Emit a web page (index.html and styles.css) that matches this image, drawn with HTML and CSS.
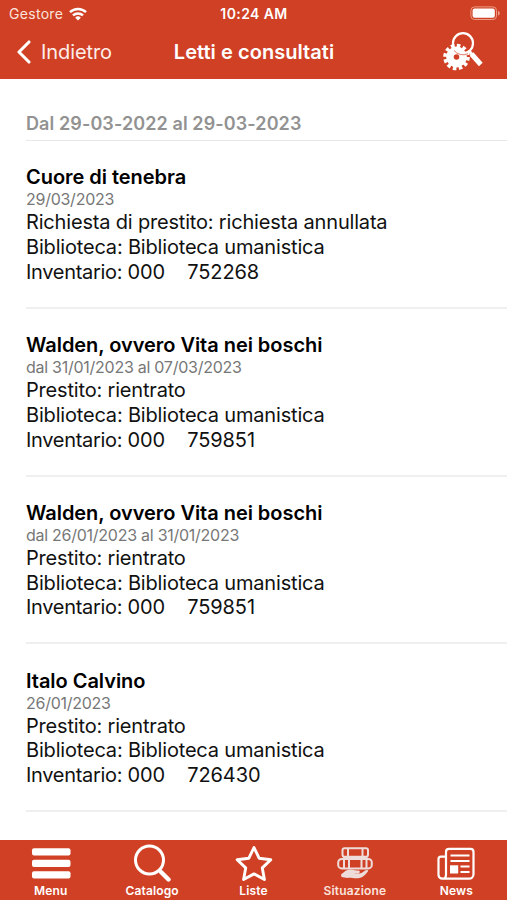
FILE: index.html
```html
<!DOCTYPE html>
<html lang="it">
	<head>
		<meta charset="utf-8"/>
		<title>Letti e consultati</title>
		<link rel="stylesheet" href="styles.css">
	</head>
	<body>
		<div class="app">
			<header class="header">
				<div class="status">
					<div class="operatore">
						<span class="gestore">Gestore</span>
						<svg class="wifi" width="18" height="14" viewBox="0 0 18 14">
							<g fill="none" stroke="#fff" stroke-width="2.5">
								<path d="M1 5.1a11.6 11.6 0 0 1 16 0"/>
								<path d="M4 8.4a7.3 7.3 0 0 1 10 0"/>
							</g>
							<path d="M9 13.6L6.2 10.7a4 4 0 0 1 5.6 0z" fill="#fff"/>
						</svg>
					</div>
					<span class="ora">10:24 AM</span>
					<svg class="batteria" width="31" height="15" viewBox="0 0 31 15">
						<rect x=".9" y=".9" width="25.6" height="12.6" rx="3.6" fill="none" stroke="#ea9c86"/>
						<rect x="2.6" y="2.6" width="22.2" height="9.2" rx="2" fill="#fff"/>
						<path d="M28 4.8c2.4.8 2.4 4 0 4.8z" fill="#ea9c86"/>
					</svg>
				</div>
				<div class="nav">
					<div class="indietro">
						<svg width="16" height="24" viewBox="0 0 16 24">
							<path d="M13 2L3 12l10 10" fill="none" stroke="#fff" stroke-width="3.1" stroke-linecap="round" stroke-linejoin="round"/>
						</svg>
						<span>Indietro</span>
					</div>
					<h1>Letti e consultati</h1>
					<svg class="filtro" width="42" height="40" viewBox="0 0 42 40">
						<circle cx="13.5" cy="25" r="6.6" fill="none" stroke="#fff" stroke-width="7.6"/>
						<circle cx="13.5" cy="25" r="11.2" fill="none" stroke="#fff" stroke-width="4.2" stroke-dasharray="3.4 2.464"/>
						<circle cx="20" cy="11.2" r="10" fill="none" stroke="#fff" stroke-width="2.2"/>
						<path d="M11 18.5a11.500 11.500 0 0 0 14 3.200" fill="none" stroke="#d04025" stroke-width=".7"/>
						<path d="M26.5 19.5l3 3.5" stroke="#fff" stroke-width="3"/>
						<path d="M28.5 22l9.300 10.500" stroke="#fff" stroke-width="5"/>
					</svg>
				</div>
			</header>

			<main class="lista">
				<h2>Dal 29-03-2022 al 29-03-2023</h2>
				<div class="libro">
					<h3>Cuore di tenebra</h3>
					<div class="data">29/03/2023</div>
					<p>Richiesta di prestito: richiesta annullata</p>
					<p>Biblioteca: Biblioteca umanistica</p>
					<p class="inventario">Inventario: <span>000    752268</span></p>
				</div>
				<div class="libro">
					<h3>Walden, ovvero Vita nei boschi</h3>
					<div class="data">dal 31/01/2023 al 07/03/2023</div>
					<p>Prestito: rientrato</p>
					<p>Biblioteca: Biblioteca umanistica</p>
					<p class="inventario">Inventario: <span>000    759851</span></p>
				</div>
				<div class="libro">
					<h3>Walden, ovvero Vita nei boschi</h3>
					<div class="data">dal 26/01/2023 al 31/01/2023</div>
					<p>Prestito: rientrato</p>
					<p>Biblioteca: Biblioteca umanistica</p>
					<p class="inventario">Inventario: <span>000    759851</span></p>
				</div>
				<div class="libro">
					<h3>Italo Calvino</h3>
					<div class="data">26/01/2023</div>
					<p>Prestito: rientrato</p>
					<p>Biblioteca: Biblioteca umanistica</p>
					<p class="inventario">Inventario: <span>000    726430</span></p>
				</div>
			</main>

			<nav class="tabs">
				<div class="tab">
					<svg width="42" height="42" viewBox="0 0 42 42">
						<g fill="#fff">
							<rect x="2" y="8.3" width="38.5" height="7.2" rx="2"/>
							<rect x="2" y="19.8" width="38.5" height="7.2" rx="2"/>
							<rect x="2" y="31.2" width="38.5" height="7.2" rx="2"/>
						</g>
					</svg>
					<span>Menu</span>
				</div>
				<div class="tab">
					<svg width="42" height="42" viewBox="0 0 42 42">
						<circle cx="18.5" cy="20" r="14" fill="none" stroke="#fff" stroke-width="3"/>
						<path d="M27.500 29.500l3 3" stroke="#fff" stroke-width="3"/>
						<path d="M30 32l7.500 7.500" stroke="#fff" stroke-width="4.400" stroke-linecap="round"/>
					</svg>
					<span>Catalogo</span>
				</div>
				<div class="tab">
					<svg width="42" height="42" viewBox="0 0 42 42">
						<path d="M21 7.500l5.100 10.700 11.700 1.600-8.500 8.100 2.100 11.600L21 33.900 10.600 39.500l2.100-11.600-8.500-8.100 11.700-1.600z" fill="none" stroke="#fff" stroke-width="2.900" stroke-linejoin="round"/>
					</svg>
					<span>Liste</span>
				</div>
				<div class="tab situazione">
					<svg width="42" height="42" viewBox="0 0 42 42">
						<g fill="none" stroke="#eddcd9" stroke-width="2">
							<rect x="8.5" y="8.200" width="25.500" height="8.600" rx="2"/>
							<path d="M14 8.200v8.600M28.500 8.200v8.600"/>
							<rect x="4.200" y="19" width="33.600" height="9.400" rx="3.500"/>
							<path d="M10 19v9.400M15 19v9.400M27.500 19v9.400M32.500 19v9.400M9 17.900h24.500"/>
						</g>
						<path d="M7 34.500c3-2.500 5.500-5 9-5 3 0 4 1 8 1 2.500 0 2.500 2.700 0 2.900h-4c5 1 8-.4 10-2.200 2.500-2 5.500-1.200 3.500.9-2.200 2.700-4.500 5.400-8 6-5 .9-8.500-.9-12-.2L7.500 37z" fill="#eddcd9"/>
					</svg>
					<span>Situazione</span>
				</div>
				<div class="tab">
					<svg width="42" height="42" viewBox="0 0 42 42">
						<g fill="none" stroke="#fff" stroke-width="2.200">
							<path d="M10.700 16.700H6a2.500 2.500 0 0 0-2.500 2.500v16a4 4 0 0 0 4 3.500h26.500a4.500 4.500 0 0 0 4.500-4.500V11.900a3 3 0 0 0-3-3H14a3 3 0 0 0-3 3v22.500c0 3-1.400 4.300-3.500 4.300"/>
							<path d="M15.500 15.500h19M15.500 21h19M25.500 26.500h9M25.500 32h9"/>
						</g>
						<rect x="15" y="25.300" width="8.200" height="8.200" fill="#fff"/>
					</svg>
					<span>News</span>
				</div>
			</nav>
		</div>
	</body>
</html>
```

FILE: styles.css
```css
html, body {
	width: 100%; height: 100%;
	padding: 0; border: 0; margin: 0;
	background: #fff;
	font-family: Inter, "Liberation Sans", sans-serif;
}
h1, h2, h3, p {
	margin: 0;
}
svg {
	display: block;
	flex: none;
}
.app {
	display: flex;
	flex-direction: column;
	height: 100vh;
	overflow: hidden;
}
.header {
	height: 79px;
	flex: none;
	background: #d04025;
	color: #fff;
}
.status {
	display: grid;
	grid-template-columns: 1fr auto 1fr;
	align-items: center;
	height: 27px;
	padding: 0 6px 0 9px;
	font-size: 14px;
}
.operatore {
	display: flex;
	align-items: center;
	gap: 6px;
	letter-spacing: .3px;
}
.operatore .gestore {
	color: #fbe3dc;
}
.ora {
	margin-right: 2px;
	font-weight: 600;
	letter-spacing: .4px;
}
.batteria {
	justify-self: end;
}
.nav {
	display: grid;
	grid-template-columns: 1fr auto 1fr;
	align-items: center;
	height: 50px;
	padding: 0 22px 0 16px;
}
.indietro {
	display: flex;
	align-items: center;
	gap: 9px;
	font-size: 20px;
	letter-spacing: -.1px;
	color: #fdeee9;
}
.nav h1 {
	padding-left: 7px;
	font-size: 20px;
	font-weight: 600;
	letter-spacing: .05px;
}
.filtro {
	justify-self: end;
}
.lista {
	flex: 1;
	min-height: 0;
	overflow: hidden;
	padding-left: 26px;
}
.lista h2 {
	height: 62px;
	box-sizing: border-box;
	padding-top: 33px;
	line-height: 24px;
	font-size: 18px;
	font-weight: 600;
	letter-spacing: .1px;
	color: #929292;
	border-bottom: 1px solid #e8e8e8;
}
.libro {
	height: 167.8px;
	box-sizing: border-box;
	padding-top: 24.3px;
	border-bottom: 2px solid #efefef;
	font-size: 20px;
	line-height: 24.8px;
	letter-spacing: -.18px;
	color: #111;
}
.libro h3 {
	line-height: 24px;
	font-size: 20px;
	font-weight: 600;
	letter-spacing: -.04px;
	color: #000;
}
.data {
	margin-bottom: 1px;
	line-height: 20px;
	font-size: 16px;
	letter-spacing: -.26px;
	color: #777;
}
.libro p {
	white-space: pre;
}
.inventario {
	letter-spacing: -.3px;
}
.inventario span {
	letter-spacing: -.1px;
}
.tabs {
	display: flex;
	flex: none;
	height: 60px;
	background: #d04025;
}
.tab {
	flex: 1;
	display: flex;
	flex-direction: column;
	align-items: center;
	color: #fff;
	font-size: 12px;
	font-weight: 600;
	line-height: 17px;
	letter-spacing: .15px;
}
.situazione {
	color: #fbe3dc;
}
```
